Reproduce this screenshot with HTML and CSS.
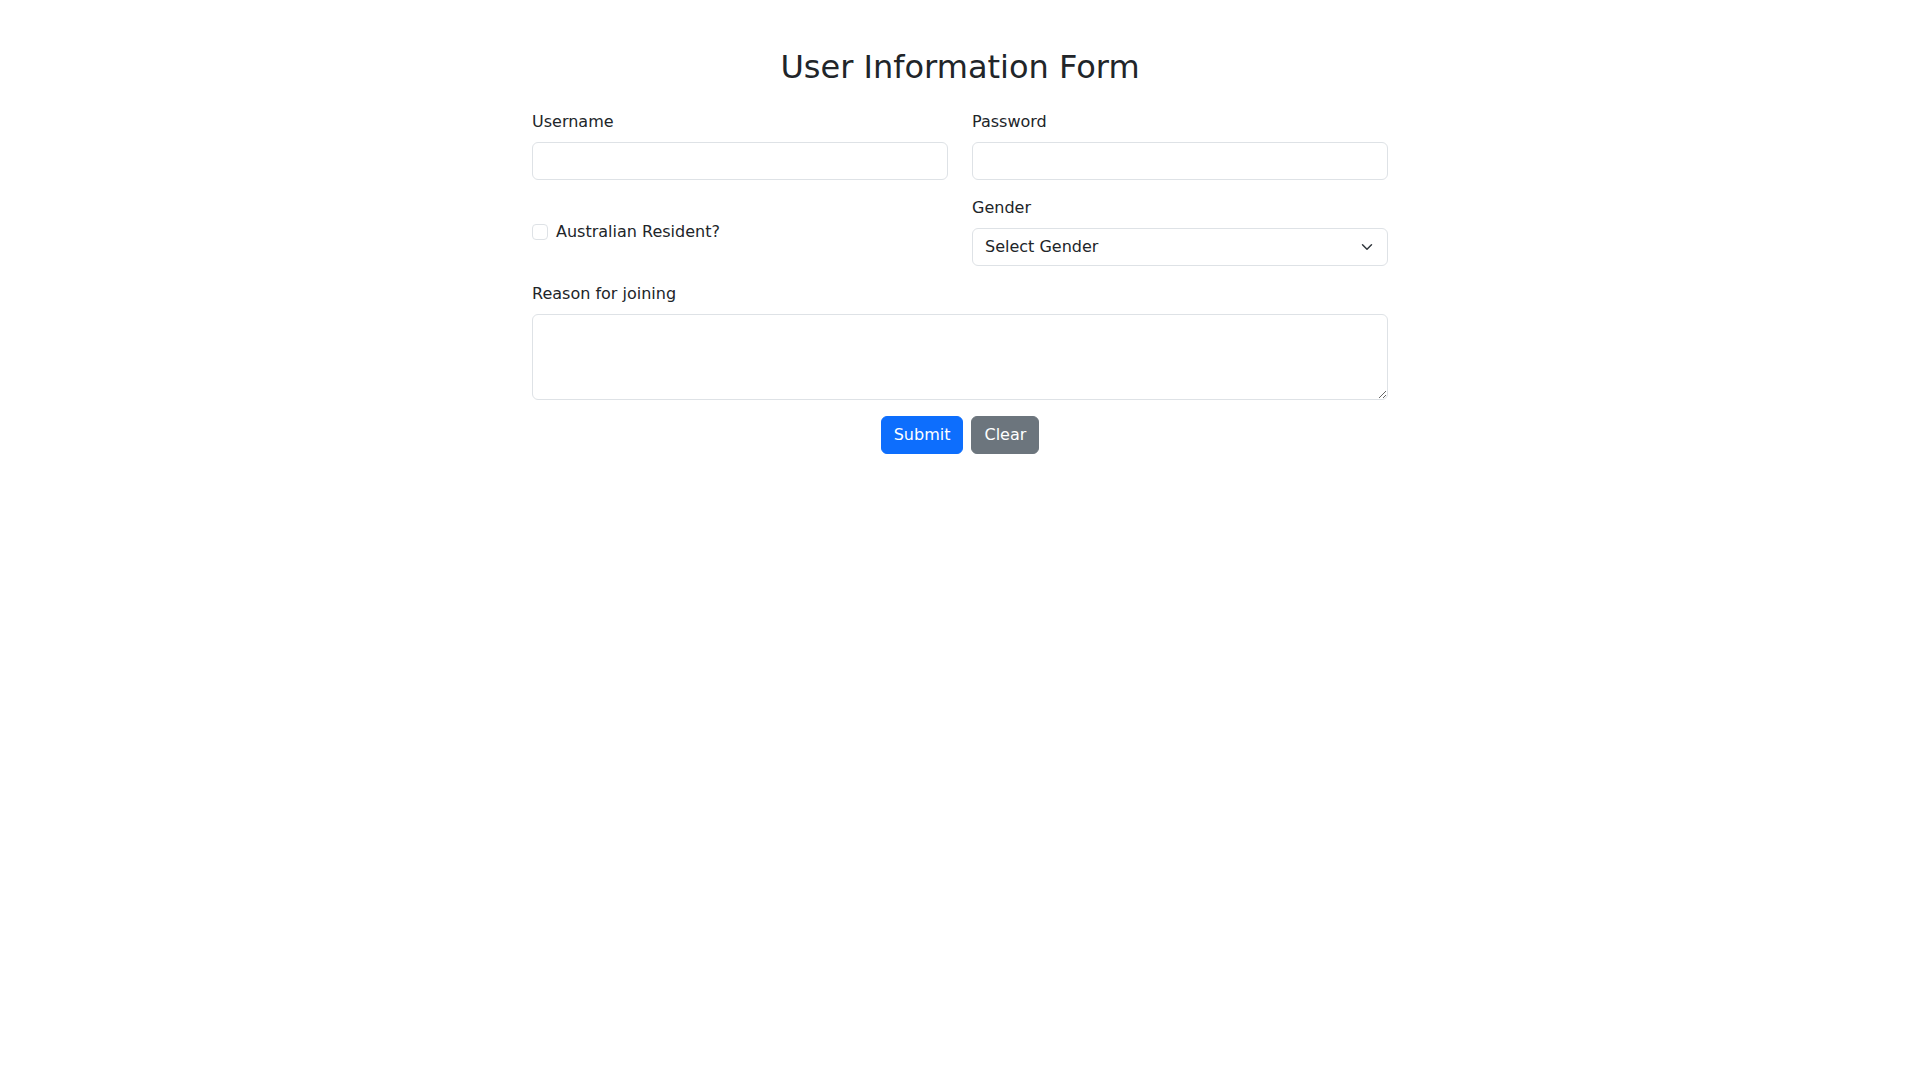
FILE: index.html
```html
<!DOCTYPE html>
<html lang="en">
<head>
<meta charset="utf-8">
<title>User Information Form</title>
<link rel="stylesheet" href="styles.css">
</head>
<body>
<div class="container">
  <div class="form-wrap">
    <h2 class="title">User Information Form</h2>
    <form class="form">
      <div class="row">
        <div class="col">
          <label class="label" for="username">Username</label>
          <input class="control" type="text" id="username">
        </div>
        <div class="col">
          <label class="label" for="password">Password</label>
          <input class="control" type="password" id="password">
        </div>
      </div>
      <div class="row row-center">
        <div class="col">
          <div class="check">
            <input class="check-input" type="checkbox" id="resident">
            <label class="check-label" for="resident">Australian Resident?</label>
          </div>
        </div>
        <div class="col">
          <label class="label" for="gender">Gender</label>
          <select class="control select" id="gender">
            <option>Select Gender</option>
            <option>Male</option>
            <option>Female</option>
            <option>Other</option>
          </select>
        </div>
      </div>
      <div class="row">
        <div class="col col-full">
          <label class="label" for="reason">Reason for joining</label>
          <textarea class="control textarea" id="reason" rows="3"></textarea>
        </div>
      </div>
      <div class="actions">
        <button type="submit" class="btn btn-primary">Submit</button>
        <button type="button" class="btn btn-secondary">Clear</button>
      </div>
    </form>
  </div>
</div>
</body>
</html>
```

FILE: styles.css
```css
* {
  box-sizing: border-box;
}

body {
  margin: 0;
  font-family: "DejaVu Sans", "Liberation Sans", sans-serif;
  font-size: 16px;
  line-height: 1.5;
  color: #212529;
  background: #ffffff;
}

.container {
  width: 1320px;
  margin: 48px auto 0;
  padding: 0 12px;
}

.form-wrap {
  width: 856px;
  margin: 0 auto;
}

.title {
  margin: 0 0 24px;
  font-size: 32px;
  font-weight: 500;
  line-height: 1.2;
  text-align: center;
}

.form {
  display: flex;
  flex-direction: column;
}

.row {
  display: flex;
  gap: 24px;
  margin-bottom: 16px;
}

.row-center {
  align-items: center;
}

.col {
  flex: 1 1 0;
  display: flex;
  flex-direction: column;
  min-width: 0;
}

.col-full {
  flex: 1 1 100%;
}

.label {
  display: block;
  margin-bottom: 8px;
  line-height: 24px;
}

.control {
  display: block;
  width: 100%;
  height: 38px;
  padding: 6px 12px;
  font-family: inherit;
  font-size: 16px;
  line-height: 1.5;
  color: #212529;
  background-color: #fff;
  border: 1px solid #dee2e6;
  border-radius: 6px;
  appearance: none;
  outline: none;
}

.select {
  padding-right: 36px;
  background-image: url("data:image/svg+xml,%3csvg xmlns='http://www.w3.org/2000/svg' viewBox='0 0 16 16'%3e%3cpath fill='none' stroke='%23343a40' stroke-linecap='round' stroke-linejoin='round' stroke-width='2' d='m2 5 6 6 6-6'/%3e%3c/svg%3e");
  background-repeat: no-repeat;
  background-position: right 12px center;
  background-size: 16px 12px;
}

.textarea {
  height: 86px;
  resize: vertical;
}

.check {
  display: flex;
  align-items: center;
  min-height: 24px;
  margin-top: 1px;
}

.check-input {
  appearance: none;
  width: 16px;
  height: 16px;
  margin: 0 8px 0 0;
  border: 1px solid #dee2e6;
  border-radius: 4px;
  background: #fff;
  flex-shrink: 0;
}

.check-input:checked {
  background-color: #0d6efd;
  border-color: #0d6efd;
}

.check-label {
  line-height: 24px;
}

.actions {
  display: flex;
  justify-content: center;
  gap: 8px;
}

.btn {
  display: inline-block;
  padding: 6px 12px;
  font-family: inherit;
  font-size: 16px;
  line-height: 1.5;
  color: #fff;
  border: 1px solid transparent;
  border-radius: 6px;
  cursor: pointer;
}

.btn-primary {
  background-color: #0d6efd;
  border-color: #0d6efd;
}

.btn-secondary {
  background-color: #6c757d;
  border-color: #6c757d;
}
```
